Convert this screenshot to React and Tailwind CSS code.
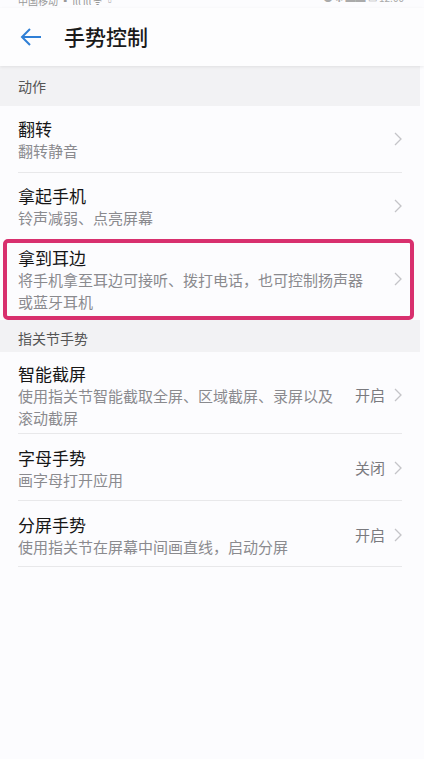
import React from 'react';

const font = { fontFamily: '"Noto Sans CJK SC", "Noto Sans", sans-serif' };

function Chevron() {
  return (
    <svg width="8" height="14" viewBox="0 0 8 14" className="shrink-0">
      <path d="M1 1 L7 7 L1 13" fill="none" stroke="#c4c4c8" strokeWidth="1.3" />
    </svg>
  );
}

function Row({ title, sub, value, divider = true, boxed = false, pad = 'pt-[11px] pb-[10px]' }) {
  const body = (
    <div className="flex items-center">
      <div className="flex-1 min-w-0 pr-[20px]">
        <p className="text-[17px] leading-[23px] text-[#161616]">{title}</p>
        <p className="text-[15px] leading-[21.5px] text-[#8a8a8e]">{sub}</p>
      </div>
      {value && <span className="text-[15px] text-[#7a7a7e] mr-[9px]">{value}</span>}
      <Chevron />
    </div>
  );

  if (boxed) {
    return (
      <div className="mt-[1px] ml-[3px] mr-[10px] border-[4px] border-[#d8306e] rounded-[5px] pl-[11px] pr-[8px] pt-[3px] pb-[4px]">
        {body}
      </div>
    );
  }

  return (
    <div className="pl-[18px] pr-[22px]">
      <div className={`${pad} ${divider ? 'border-b border-[#e8e8ea]' : ''}`}>{body}</div>
    </div>
  );
}

export default function App() {
  return (
    <div className="min-h-[759px] w-[424px] bg-[#fcfcfe] overflow-hidden" style={font}>
      {/* status bar, mostly cut off */}
      <div className="h-[8px] overflow-hidden flex justify-between px-[18px]">
        <span className="text-[10px] leading-[10px] -mt-[4px] text-[#999]">中国移动 ▪ ıll ıll ᯤ ▫</span>
        <span className="text-[10px] leading-[10px] -mt-[7px] text-[#aaa] pr-[2px]">● ✱ ▬▬ ▭ 12:00</span>
      </div>

      {/* header */}
      <div className="h-[58px] flex items-center bg-[#fdfdfe] shadow-[0_1px_3px_rgba(0,0,0,0.08)] relative">
        <svg width="24" height="20" viewBox="0 0 24 20" className="ml-[19px]">
          <path d="M22 10 H3 M11 2 L3 10 L11 18" fill="none" stroke="#2f7fd6" strokeWidth="2" />
        </svg>
        <h1 className="ml-[21px] text-[21px] text-[#1a1a1a] font-medium">手势控制</h1>
      </div>

      {/* section: actions */}
      <div className="h-[40px] bg-[#f2f2f4] flex items-center pl-[18px] mr-[4px]">
        <span className="text-[14px] text-[#555]">动作</span>
      </div>
      <Row title="翻转" sub="翻转静音" />
      <Row title="拿起手机" sub="铃声减弱、点亮屏幕" divider={false} />
      <Row
        boxed
        title="拿到耳边"
        sub="将手机拿至耳边可接听、拨打电话，也可控制扬声器或蓝牙耳机"
      />

      {/* section: knuckle */}
      <div className="h-[32px] bg-[#f2f2f4] pt-[8px] pl-[18px] mr-[4px]">
        <p className="text-[14px] leading-[20px] text-[#555]">指关节手势</p>
      </div>
      <Row
        title="智能截屏"
        sub="使用指关节智能截取全屏、区域截屏、录屏以及滚动截屏"
        value="开启"
        pad="pt-[10px] pb-[5px]"
      />
      <Row title="字母手势" sub="画字母打开应用" value="关闭" pad="pt-[12px] pb-[9px]" />
      <Row title="分屏手势" sub="使用指关节在屏幕中间画直线，启动分屏" value="开启" pad="pt-[12px] pb-[9px]" />
    </div>
  );
}
